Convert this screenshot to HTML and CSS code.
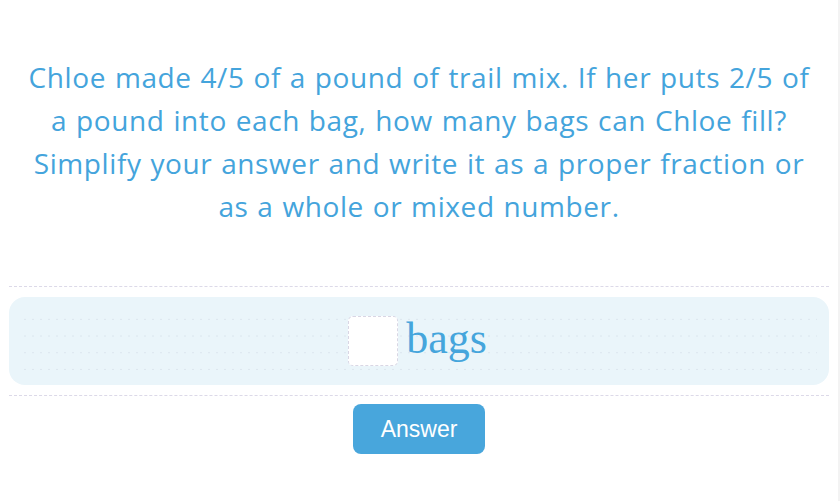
FILE: index.html
```html
<!DOCTYPE html>
<html>
<head>
<meta charset="utf-8">
<link rel="stylesheet" href="styles.css">
</head>
<body>
<div class="page">
  <p class="question">Chloe made 4/5 of a pound of trail mix. If her puts 2/5 of<br>a pound into each bag, how many bags can Chloe fill?<br>Simplify your answer and write it as a proper fraction or<br>as a whole or mixed number.</p>
  <div class="rule"></div>
  <div class="answer-box">
    <div class="dots"></div>
    <div class="answer-line">
      <div class="input"></div>
      <span class="unit">bags</span>
    </div>
  </div>
  <div class="rule rule-bottom"></div>
  <div class="actions">
    <button class="btn">Answer</button>
  </div>
</div>
</body>
</html>
```

FILE: styles.css
```css
html, body {
  margin: 0;
  padding: 0;
  background: #fff;
}
body {
  width: 840px;
  height: 501px;
  overflow: hidden;
  border-right: 2px solid #f3f3f3;
  box-sizing: border-box;
}
.page {
  padding: 56px 9px 0 9px;
  width: 820px;
}
.question {
  margin: 0;
  font-family: "Open Sans", sans-serif;
  font-size: 28px;
  line-height: 43px;
  color: #44a4dc;
  text-align: center;
  letter-spacing: 0.6px;
  word-spacing: 1px;
  white-space: nowrap;
}
.rule {
  margin-top: 58px;
  border-top: 1px dashed #dcd9e8;
}
.rule-bottom {
  margin-top: 10px;
}
.answer-box {
  position: relative;
  margin-top: 10px;
  height: 88px;
  background: #eaf5fa;
  border-radius: 16px;
  display: flex;
  align-items: center;
  justify-content: center;
}
.dots {
  position: absolute;
  left: 12px;
  right: 12px;
  top: 14px;
  height: 66px;
  background-image: radial-gradient(circle, #cdd7e2 0.7px, transparent 1px);
  background-size: 8px 16.7px;
  opacity: 0.5;
}
.answer-line {
  position: relative;
  display: flex;
  align-items: center;
  gap: 8px;
  margin-left: -3px;
}
.input {
  width: 48px;
  height: 48px;
  background: #fff;
  border: 1px dashed #d9d6e4;
  border-radius: 5px;
}
.unit {
  font-family: "Liberation Serif", serif;
  font-size: 44px;
  line-height: 50px;
  color: #45a5dc;
  margin-top: -4px;
}
.actions {
  display: flex;
  justify-content: center;
  margin-top: 8px;
}
.btn {
  width: 132px;
  height: 50px;
  border: none;
  border-radius: 8px;
  background: #48a6dc;
  color: #fff;
  font-family: "Liberation Sans", Arial, sans-serif;
  font-size: 23px;
  padding: 0;
}
```
